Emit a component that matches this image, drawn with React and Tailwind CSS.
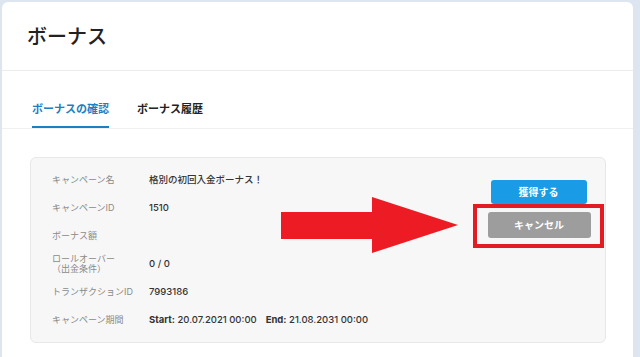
const rows = [
  { label: "キャンペーン名", value: "格別の初回入金ボーナス！" },
  { label: "キャンペーンID", value: "1510" },
  { label: "ボーナス額", value: "" },
  { label: ["ロールオーバー", "（出金条件）"], value: "0 / 0" },
  { label: "トランザクションID", value: "7993186" },
  { label: "キャンペーン期間", period: true },
];

const font = "font-['Inter','Noto_Sans_CJK_JP',sans-serif]";

export default function App() {
  return (
    <div
      className={`relative h-[357px] w-[640px] overflow-hidden bg-[#dce5f0] pl-[2px] pt-[2px] ${font}`}
    >
      <div className="h-[400px] w-[631px] rounded-md bg-white">
        <div className="flex h-[69px] items-center border-b border-[#ececec] pl-[25px] pt-[2px]">
          <h1 className="text-[20px] font-medium text-[#222]">ボーナス</h1>
        </div>

        <div className="flex h-[58px] items-end gap-[28px] border-b border-[#f0f0f0] pl-[30px]">
          <div className="border-b-2 border-[#1b7fc4] pb-[9px] text-[11px] font-semibold text-[#1b7fc4]">
            ボーナスの確認
          </div>
          <div className="pb-[11px] text-[11px] font-semibold text-[#222]">
            ボーナス履歴
          </div>
        </div>

        <div className="ml-[28px] mt-[28px] flex w-[576px] rounded-md border border-[#e8e8e8] bg-[#f7f7f7] pb-[8px] pl-[21px] pt-[8px]">
          <div className="flex-1">
            {rows.map((row, i) => (
              <div key={i} className="flex h-[28px] items-center">
                <div className="w-[97px] text-[9px] leading-[10px] text-[#8a8a8a]">
                  {Array.isArray(row.label) ? (
                    <>
                      <div>{row.label[0]}</div>
                      <div>{row.label[1]}</div>
                    </>
                  ) : (
                    row.label
                  )}
                </div>
                <div className="text-[9.5px] font-medium text-[#333]">
                  {row.period ? (
                    <>
                      <span className="font-bold">Start:</span> 20.07.2021 00:00
                      <span className="ml-[9px] font-bold">End:</span> 21.08.2031 00:00
                    </>
                  ) : (
                    row.value
                  )}
                </div>
              </div>
            ))}
          </div>

          <div className="mr-[1px] flex w-[131px] flex-col items-center pt-[14px]">
            <button className="h-[24px] w-[96px] rounded-[3px] bg-[#1a9be6] text-[10px] font-bold text-white">
              獲得する
            </button>
            <div className="flex h-[44px] w-[131px] items-start justify-center border-4 border-[#e31b23] pl-[1px] pt-[4px]">
              <button className="h-[26px] w-[103px] rounded-[3px] bg-[#9d9d9d] text-[10px] font-bold text-white">
                キャンセル
              </button>
            </div>
          </div>
        </div>
      </div>

      <svg
        className="absolute left-[281px] top-[197px]"
        width="178"
        height="57"
        viewBox="0 0 178 57"
      >
        <polygon points="0,15 91,15 91,0 177,28 91,56 91,42 0,42" fill="#ed1c24" />
      </svg>
    </div>
  );
}
